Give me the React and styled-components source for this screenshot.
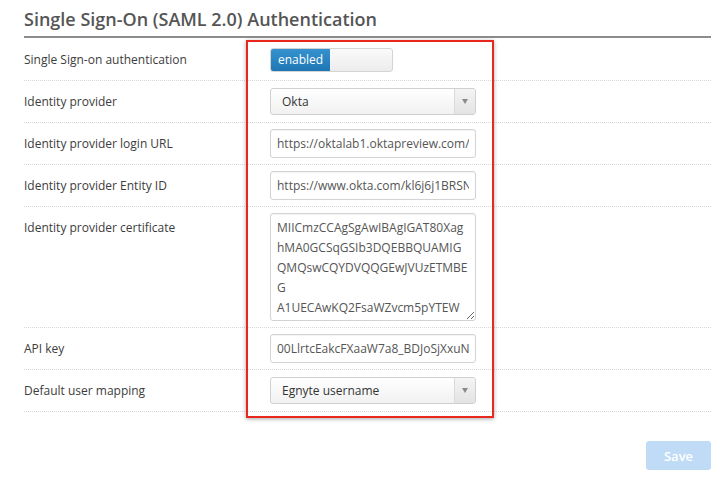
import React from 'react';
import styled, { createGlobalStyle } from 'styled-components';

const GlobalStyle = createGlobalStyle`
  body {
    margin: 0;
    background: #fff;
    font-family: "Open Sans", "Liberation Sans", sans-serif;
  }
`;

const Page = styled.div`
  width: 687px;
  padding: 0 16px 0 24px;
`;

const Title = styled.h2`
  margin: 0;
  padding: 7px 0 5px;
  font-size: 18px;
  line-height: 24px;
  font-weight: 600;
  color: #555;
  border-bottom: 2px solid #8c8c8c;
`;

const Form = styled.div`
  position: relative;
  padding-top: 1px;
`;

const Row = styled.div`
  display: grid;
  grid-template-columns: 246px 206px;
  align-items: ${props => (props.top ? 'start' : 'center')};
  padding: 6px 0;
  min-height: 29px;
  border-bottom: 1px dotted #d8d8d8;
  &:last-child {
    border-bottom: none;
  }
`;

const Label = styled.div`
  font-size: 12px;
  line-height: 29px;
  color: #3c3c3c;
`;

const Toggle = styled.div`
  display: flex;
  width: 123px;
  height: 24px;
  border: 1px solid #d4d4d4;
  border-radius: 3px;
  box-sizing: border-box;
  overflow: hidden;
  background: linear-gradient(#fafafa, #ececec);
`;

const ToggleOn = styled.span`
  width: 59px;
  background: linear-gradient(#3592cf, #1f76b4);
  color: #fff;
  font-size: 12px;
  line-height: 22px;
  text-align: center;
`;

const Select = styled.div`
  display: flex;
  height: 27px;
  box-sizing: border-box;
  border: 1px solid #d0d0d0;
  border-radius: 3px;
  background: linear-gradient(#fff, #f1f1f1);
  color: #333;
  font-size: 12px;
`;

const SelectValue = styled.span`
  flex: 1;
  padding-left: 11px;
  line-height: 25px;
`;

const SelectArrow = styled.span`
  width: 20px;
  border-left: 1px solid #dadada;
  background: linear-gradient(#f4f4f4, #e3e3e3);
  display: flex;
  align-items: center;
  justify-content: center;
  border-radius: 0 2px 2px 0;
  &::after {
    content: '';
    border-left: 3.5px solid transparent;
    border-right: 3.5px solid transparent;
    border-top: 5px solid #8a8a8a;
  }
`;

const Input = styled.input`
  width: 206px;
  height: 29px;
  box-sizing: border-box;
  padding: 0 6px;
  border: 1px solid #d3d3d3;
  border-radius: 3px;
  box-shadow: inset 0 1px 1px rgba(0, 0, 0, 0.05);
  font-family: inherit;
  font-size: 12px;
  color: #555;
  outline: none;
`;

const TextArea = styled.textarea`
  width: 206px;
  height: 108px;
  box-sizing: border-box;
  padding: 4px 6px;
  border: 1px solid #d3d3d3;
  border-radius: 3px;
  box-shadow: inset 0 1px 1px rgba(0, 0, 0, 0.05);
  font-family: inherit;
  font-size: 12px;
  line-height: 20px;
  color: #555;
  overflow: hidden;
  white-space: pre;
  resize: vertical;
  outline: none;
  display: block;
`;

const Highlight = styled.div`
  position: absolute;
  left: 222px;
  top: 2px;
  width: 248px;
  height: 378px;
  box-sizing: border-box;
  border: 2px solid #e8271f;
  box-shadow: 0 1px 4px rgba(0, 0, 0, 0.35);
  pointer-events: none;
`;

const Footer = styled.div`
  display: flex;
  justify-content: flex-end;
  padding-top: 29px;
`;

const SaveButton = styled.button`
  width: 65px;
  height: 29px;
  border: none;
  border-radius: 3px;
  background: #c0dbf6;
  color: #fff;
  font-family: inherit;
  font-size: 13px;
  font-weight: 600;
`;

const cert = [
  'MIICmzCCAgSgAwIBAgIGAT80Xag',
  'hMA0GCSqGSIb3DQEBBQUAMIG',
  'QMQswCQYDVQQGEwJVUzETMBE',
  'G',
  'A1UECAwKQ2FsaWZvcm5pYTEW',
  'MBQGA1UEBwwNU2FuIEZyYW5j',
].join('\n');

const DropDown = ({ value }) => (
  <Select>
    <SelectValue>{value}</SelectValue>
    <SelectArrow />
  </Select>
);

export default function App() {
  return (
    <>
      <GlobalStyle />
      <Page>
        <Title>Single Sign-On (SAML 2.0) Authentication</Title>
        <Form>
          <Row>
            <Label>Single Sign-on authentication</Label>
            <Toggle>
              <ToggleOn>enabled</ToggleOn>
            </Toggle>
          </Row>
          <Row>
            <Label>Identity provider</Label>
            <DropDown value="Okta" />
          </Row>
          <Row>
            <Label>Identity provider login URL</Label>
            <Input readOnly value="https://oktalab1.oktapreview.com/app/egnyte/sso/saml" />
          </Row>
          <Row>
            <Label>Identity provider Entity ID</Label>
            <Input readOnly value="https://www.okta.com/kl6j6j1BRSNJXWQMTLAT" />
          </Row>
          <Row top>
            <Label>Identity provider certificate</Label>
            <TextArea readOnly value={cert} />
          </Row>
          <Row>
            <Label>API key</Label>
            <Input readOnly value="00LlrtcEakcFXaaW7a8_BDJoSjXxuNqP" />
          </Row>
          <Row>
            <Label>Default user mapping</Label>
            <DropDown value="Egnyte username" />
          </Row>
          <Highlight />
        </Form>
        <Footer>
          <SaveButton>Save</SaveButton>
        </Footer>
      </Page>
    </>
  );
}
